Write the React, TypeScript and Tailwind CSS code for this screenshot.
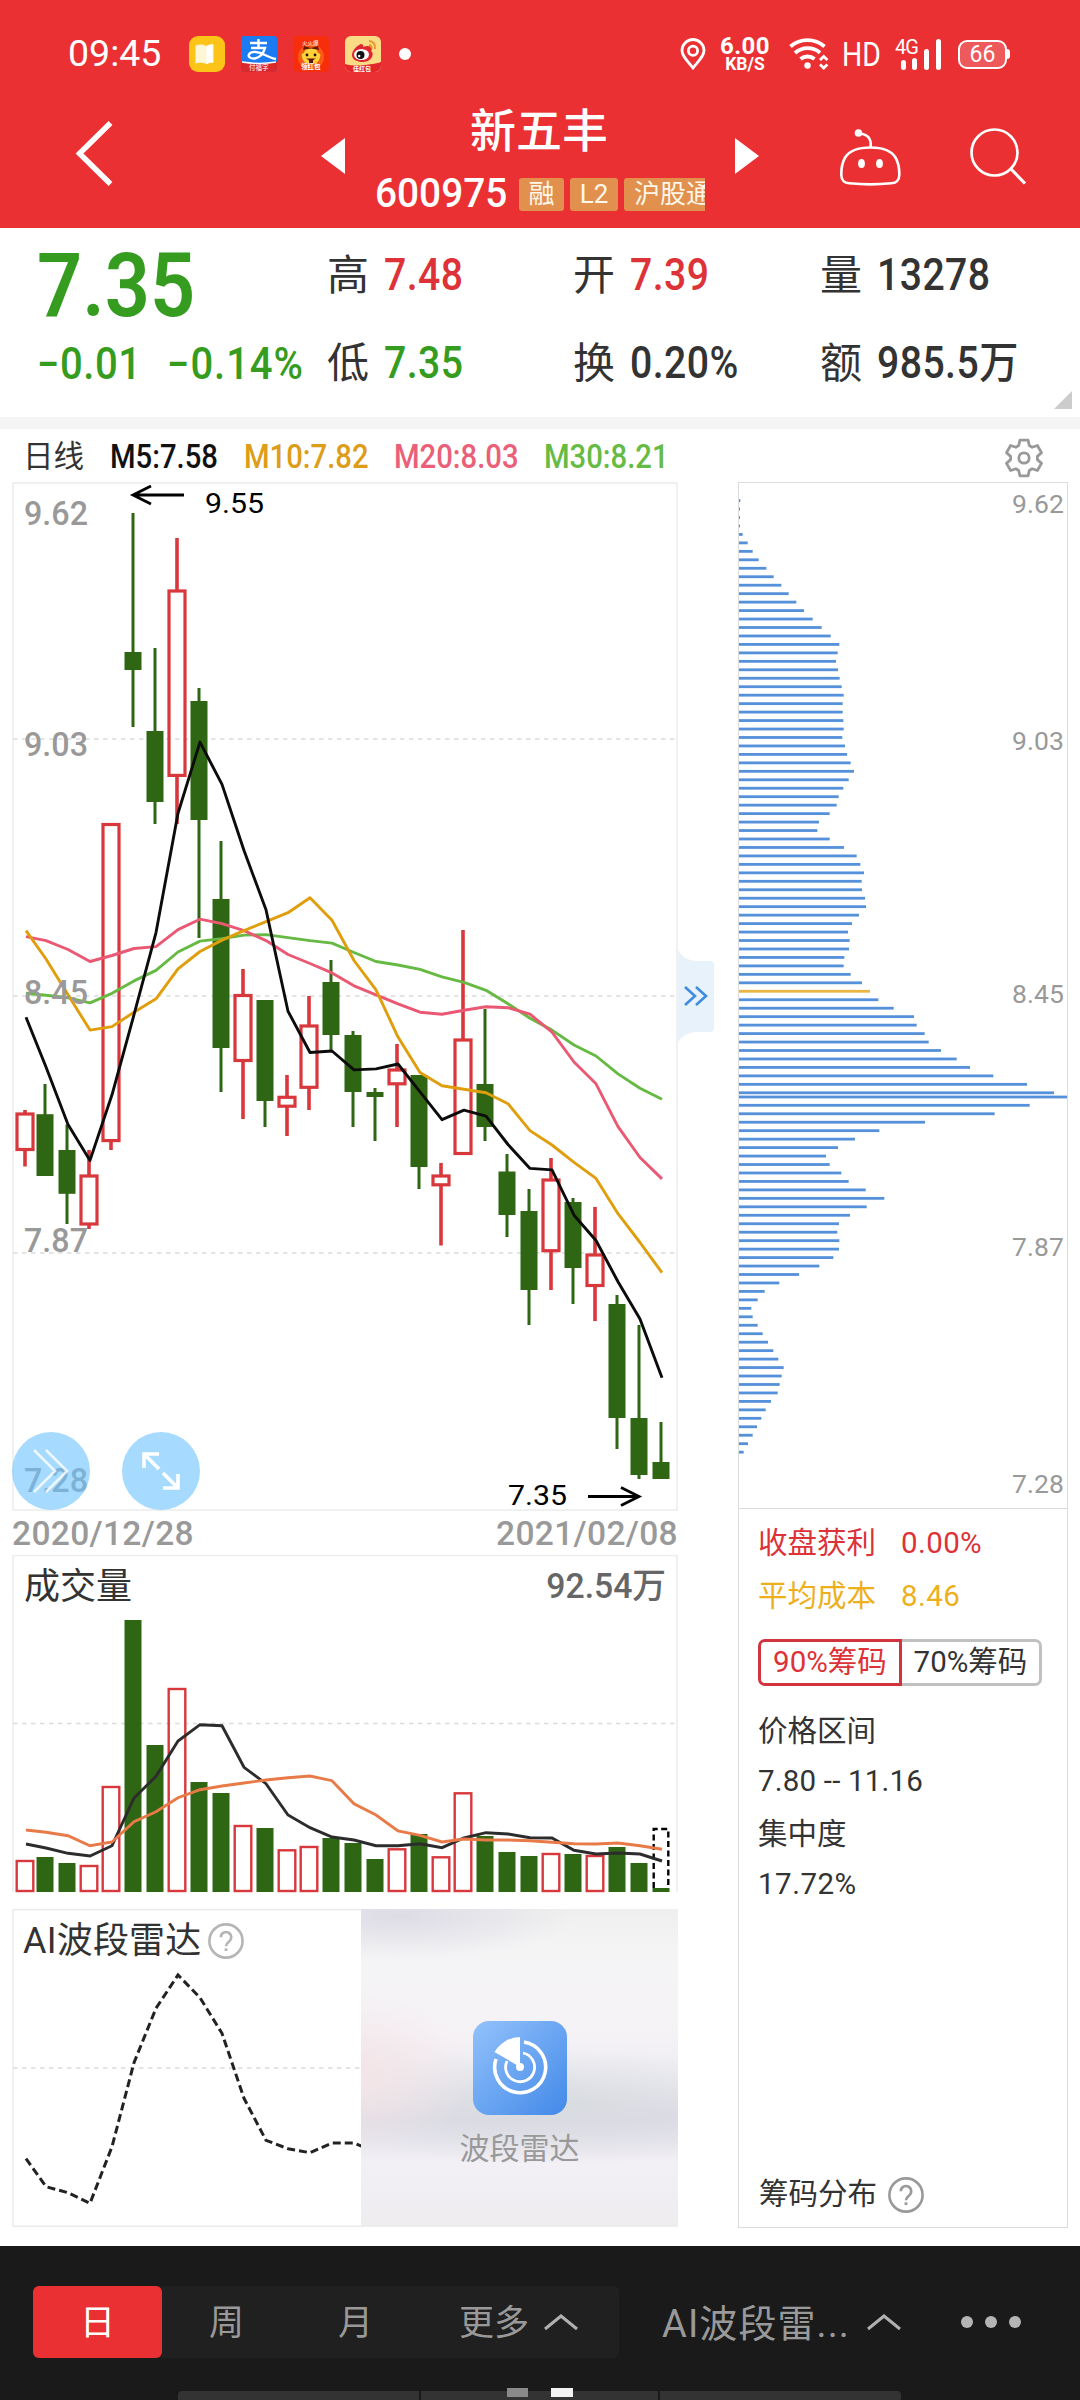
import type { ReactNode } from "react";
import clsx from "clsx";

type Candle = {
  up: boolean;
  high: number;
  top: number;
  bottom: number;
  low: number;
};

const c = (up: boolean, high: number, top: number, bottom: number, low: number): Candle => ({
  up,
  high,
  top,
  bottom,
  low,
});

const candles: Candle[] = [
  c(true, 1110, 1114, 1149.5, 1166.5),
  c(false, 1084, 1114.2, 1176, 1176),
  c(false, 1124.6, 1150, 1193.8, 1224),
  c(true, 1150, 1176, 1224, 1229),
  c(true, 824, 824.5, 1140.6, 1150),
  c(false, 513, 652, 670, 727),
  c(false, 648, 731, 802, 824),
  c(true, 538, 591, 775.4, 824),
  c(false, 688, 701, 820, 938),
  c(false, 841, 899, 1048, 1092),
  c(true, 969, 995.5, 1060.5, 1119),
  c(false, 1000, 1000, 1101, 1127),
  c(true, 1075, 1097.3, 1106.2, 1136),
  c(true, 996, 1026, 1087.3, 1110),
  c(false, 960, 982, 1035, 1050),
  c(false, 1031, 1035, 1092, 1127),
  c(false, 1088, 1092, 1097, 1141),
  c(true, 1044, 1070, 1083.8, 1127),
  c(false, 1075, 1075, 1167, 1189),
  c(true, 1163, 1176, 1184.8, 1245.5),
  c(true, 930, 1040, 1153.5, 1154),
  c(false, 1009, 1084, 1127, 1141),
  c(false, 1154, 1171.5, 1215, 1237),
  c(false, 1189, 1211, 1290, 1325),
  c(true, 1158, 1180, 1250.7, 1290),
  c(false, 1198, 1202, 1268, 1304),
  c(true, 1207, 1255, 1285.5, 1321),
  c(false, 1295, 1304, 1418, 1449),
  c(false, 1325, 1418, 1475, 1479),
  c(false, 1422, 1462, 1479, 1479),
];

const ma5 = [
  1017.2, 1067, 1124.6, 1160.4, 1094.8, 1014.7, 932.6, 813.2, 742.1, 784.4, 850.5, 909.7, 1011.2, 1052.5, 1051,
  1069.9, 1068.9, 1064, 1091.8, 1119.7, 1110.2, 1116.2, 1144.5, 1168.4, 1169.9, 1215.2, 1240.5, 1281.7, 1319, 1377.7,
];
const ma10 = [
  930.6, 959, 994.8, 1030.1, 1026.6, 1012.2, 998.8, 968.9, 951.5, 940.1, 930.6, 921.7, 912.7, 897.8, 920.2, 960.5,
  989.8, 1037.1, 1072.4, 1085.8, 1089.3, 1092.8, 1103.7, 1130.6, 1145, 1162.4, 1178.4, 1213.7, 1242.5, 1272.7,
];
const ma20 = [
  936.6, 940.6, 949.5, 961.5, 955.5, 948.5, 946.6, 929.6, 919.2, 923.7, 930.6, 940.6, 954.5, 963.5, 972.9, 985.8,
  994.8, 1003.8, 1012.2, 1014.2, 1010.2, 1006.7, 1007.7, 1014.2, 1032.1, 1062, 1083.8, 1126.6, 1157.5, 1178.9,
];
const ma30 = [
  993.3, 995.3, 997.8, 1002.8, 993.3, 980.9, 970.4, 952, 941.1, 938.6, 935.1, 934.6, 937.6, 940.6, 943.1, 952.5,
  961.5, 965, 969.4, 976.9, 982.4, 990.3, 1003.8, 1018.2, 1030.1, 1045, 1056, 1073.9, 1088.3, 1099.3,
];

const volumeTops = [
  1861, 1857, 1863, 1866, 1787, 1620, 1745, 1689, 1782, 1793, 1826, 1828, 1850.3, 1847, 1838, 1843, 1859, 1849.3,
  1834, 1857.3, 1793.3, 1836, 1852, 1856, 1854, 1854, 1856, 1847, 1863,
];
const volMa5 = [
  1844, 1848, 1853.3, 1856, 1845.7, 1798, 1776.3, 1741, 1724.7, 1725.7, 1767.3, 1783.7, 1815, 1827.7, 1837, 1840,
  1845.7, 1845.7, 1843.7, 1847.7, 1838, 1832.7, 1834, 1837.7, 1838, 1850.3, 1854, 1853, 1854, 1861,
];
const volMa10 = [
  1830, 1832.3, 1835.7, 1845.7, 1842, 1821.7, 1811.7, 1797.7, 1789.7, 1786, 1783, 1780, 1777.7, 1776, 1780.7, 1803.7,
  1815, 1831, 1835.3, 1842, 1839, 1840, 1840, 1840.7, 1842.3, 1843.7, 1844, 1843, 1845.7, 1849.3,
];
const radar = [
  2158.7, 2186.7, 2192.7, 2203.3, 2146.7, 2062.7, 2008.3, 1975, 1997.7, 2033.3, 2098.3, 2140.3, 2148.7, 2152.7, 2143,
  2143, 2152,
];

// chip distribution, bar lengths from the highest price to the lowest
const chipsUpper = [
  4, 3, 3, 3, 11, 26, 41, 59, 82, 104, 127, 149, 172, 195, 221, 248, 275, 301, 296, 291, 297, 302, 308, 314, 311, 311,
  313, 314, 310, 318, 324, 335, 345, 329, 313, 299, 293, 272, 240, 235, 272, 315, 353, 364, 375, 368, 369, 378, 381,
  360, 339, 327, 332, 330, 316, 314, 335, 369, 393, 418, 464, 525, 533, 557, 569, 606, 653, 693, 763, 864, 945,
];
const chipsLower = [
  872, 767, 558, 421, 348, 297, 261, 272, 307, 329, 380, 436, 383, 333, 300, 295, 301, 300, 283, 241, 180, 121, 77, 56,
  37, 41, 56, 71, 87, 103, 118, 134, 128, 122, 116, 96, 80, 67, 54, 41, 27, 14,
];
const AVERAGE_INDEX = 58;
const STEP = 8.46;

const centerX = (i: number) => (i === 0 ? 25 : 45 + 22 * (i - 1));
const toPoints = (values: number[]) => values.map((y, i) => `${centerX(i) + 1},${y}`).join(" ");

const GREEN = "#2f6613";
const RED = "#d8383c";

const GridLine = ({ y }: { y: number }) => (
  <line x1={13} x2={677} y1={y} y2={y} stroke="#dcdcdc" strokeWidth={1.5} strokeDasharray="4.5 4.5" />
);

const PriceChart = () => (
  <svg viewBox="12 482 666 1029" className="block h-[1029px] w-[666px] font-[Roboto,sans-serif]">
    <rect x={13} y={483} width={664} height={1027} fill="none" stroke="#ececec" strokeWidth={1.5} />
    <GridLine y={739} />
    <GridLine y={996} />
    <GridLine y={1253} />
    {candles.map(({ up, high, top, bottom, low }, i) => {
      const x = centerX(i);
      return up ? (
        <g key={i} fill="none" stroke={RED} strokeWidth={3.2}>
          <path d={`M${x} ${high}V${top}M${x} ${bottom}V${low}`} strokeWidth={3.6} />
          <rect x={x - 8} y={top} width={16} height={bottom - top} />
        </g>
      ) : (
        <g key={i} fill={GREEN}>
          <rect x={x - 1.5} y={high} width={3} height={low - high} />
          <rect x={x - 8.5} y={top} width={17} height={bottom - top} />
        </g>
      );
    })}
    <g fill="none" strokeWidth={2.9} strokeLinejoin="round">
      <polyline points={toPoints(ma30)} stroke="#66b943" />
      <polyline points={toPoints(ma20)} stroke="#ea5873" />
      <polyline points={toPoints(ma10)} stroke="#e09d0c" />
      <polyline points={toPoints(ma5)} stroke="#0c0c0c" />
    </g>
    <g fill="#999" fontSize={34} fontWeight={500}>
      <text x={24} y={525} textLength={64} lengthAdjust="spacingAndGlyphs">9.62</text>
      <text x={24} y={756} textLength={64} lengthAdjust="spacingAndGlyphs">9.03</text>
      <text x={24} y={1003.5} textLength={64} lengthAdjust="spacingAndGlyphs">8.45</text>
      <text x={24} y={1252} textLength={64} lengthAdjust="spacingAndGlyphs">7.87</text>
      <text x={24} y={1491.5} textLength={64} lengthAdjust="spacingAndGlyphs">7.28</text>
    </g>
    <g fill="#000" fontSize={28.5}>
      <text x={205} y={512.5} textLength={59} lengthAdjust="spacingAndGlyphs">9.55</text>
      <text x={508} y={1505} textLength={59} lengthAdjust="spacingAndGlyphs">7.35</text>
    </g>
    <path
      d="M184 495H134M151 486L133 495L151 504M588 1496.5H638M621 1487.5L639 1496.5L621 1505.5"
      fill="none"
      stroke="#000"
      strokeWidth={2.8}
    />
  </svg>
);

const VolumeChart = () => (
  <svg viewBox="12 1555 666 338" className="block h-[338px] w-[666px]">
    <path d="M13 1892V1555.5H677V1892" fill="none" stroke="#ececec" strokeWidth={1.5} />
    <GridLine y={1723.5} />
    {volumeTops.map((y, i) =>
      candles[i].up ? (
        <rect key={i} x={centerX(i) - 8.3} y={y} width={16.6} height={1891 - y} fill="none" stroke={RED} strokeWidth={2.4} />
      ) : (
        <rect key={i} x={centerX(i) - 8.5} y={y} width={17} height={1892 - y} fill={GREEN} />
      )
    )}
    <rect x={652.5} y={1888} width={17} height={4} fill={GREEN} />
    <path d="M653.7 1888V1829H668.3V1888" fill="none" stroke="#000" strokeWidth={2.4} strokeDasharray="6 3.5" />
    <polyline points={toPoints(volMa5)} fill="none" stroke="#2c2c2c" strokeWidth={2.9} />
    <polyline points={toPoints(volMa10)} fill="none" stroke="#e87a48" strokeWidth={2.9} />
  </svg>
);

const RadarChart = () => (
  <svg viewBox="12 1909 666 318" className="block h-[318px] w-[666px]">
    <rect x={13} y={1909.7} width={664} height={316.5} fill="none" stroke="#ececec" strokeWidth={1.5} />
    <GridLine y={2068} />
    <polyline points={toPoints(radar)} fill="none" stroke="#222" strokeWidth={3} strokeDasharray="8 4" />
  </svg>
);

const ChipChart = () => {
  const bars = [
    ...chipsUpper.map((w, i) => ({ w, y: 500.6 + i * STEP, avg: i === AVERAGE_INDEX })),
    { w: 984, y: 1097, avg: false },
    ...chipsLower.map((w, i) => ({ w, y: 1105.3 + i * STEP, avg: false })),
  ];
  return (
    <svg viewBox="739 483 328 1025" className="block h-[1025px] w-[328px] font-[Roboto,sans-serif]">
      {bars.map(({ w, y, avg }, i) => (
        <rect key={i} x={739} y={y - 1.4} width={w / 3} height={2.8} fill={avg ? "#eab543" : "#5590da"} />
      ))}
      <g fill="#999" fontSize={26.5}>
        <text x={1012} y={512.5} textLength={52}>9.62</text>
        <text x={1012} y={749.5} textLength={52}>9.03</text>
        <text x={1012} y={1003} textLength={52}>8.45</text>
        <text x={1012} y={1256} textLength={52}>7.87</text>
        <text x={1012} y={1493} textLength={52}>7.28</text>
      </g>
    </svg>
  );
};

const gearPath = (() => {
  const pts: string[] = [];
  for (let i = 0; i < 6; i++) {
    for (const [r, a] of [[13.5, -23], [18.3, -13], [18.3, 13], [13.5, 23]]) {
      const t = ((i * 60 + a - 90) * Math.PI) / 180;
      pts.push(`${(20 + r * Math.cos(t)).toFixed(2)} ${(20 + r * Math.sin(t)).toFixed(2)}`);
    }
  }
  return `M${pts.join("L")}Z`;
})();

const GearIcon = () => (
  <svg viewBox="0 0 40 40" className="size-10" fill="none" stroke="#999" strokeWidth={2.8} strokeLinejoin="round">
    <path d={gearPath} />
    <circle cx={20} cy={20} r={5.2} />
  </svg>
);

const HelpIcon = ({ color = "#b5b5b5" }: { color?: string }) => (
  <svg viewBox="0 0 36 36" className="size-9" fill="none" stroke={color} strokeWidth={2.6}>
    <circle cx={18} cy={18} r={16.6} />
    <path d="M12.8 14.3a5.2 5.2 0 1 1 8.6 3.9c-2 1.6-3.4 2.4-3.4 5.1" />
    <path d="M18 25.3v2.7" strokeWidth={2.8} />
  </svg>
);

const ChevronUp = () => (
  <svg viewBox="0 0 36 18" className="h-[18px] w-9" fill="none" stroke="#b0b0b0" strokeWidth={3}>
    <path d="M2 16L18 3L34 16" />
  </svg>
);

const StatusBar = () => (
  <div className="flex h-[108px] items-center text-white">
    <span className="ml-[68px] w-[121px] text-[37.5px] leading-none">09:45</span>
    <div className="flex items-center gap-4">
      <svg viewBox="0 0 36 36" className="size-9">
        <rect width={36} height={36} rx={9} fill="#fcc419" />
        <path d="M6.5 9.5c4-1.6 8-1.4 11 .6 2.500-1.400 5-1.800 7-1.300V27c-3-.5-5 0-7 1-3.500-1.600-7-1.600-11-.6z" fill="#fff6d6" />
        <path d="M17.500 10l6-2v18l-6 2z" fill="#fff" />
      </svg>
      <svg viewBox="0 0 36 36" className="size-9">
        <rect width={36} height={36} rx={3} fill="#1a7bf2" />
        <path d="M0 25.500c12 2.500 24 2.500 36 0V33a3 3 0 0 1-3 3H3a3 3 0 0 1-3-3z" fill="#d9292d" />
        <path d="M1 26c12 1.800 24 1.800 34 0" stroke="#fff" strokeWidth={1.3} fill="none" />
        <path d="M9 7h17M17.500 3v9M10 12h14c-1.500 5-5 9.500-10 10.500-5 .5-7-2-6-4 2-4 10-3 16 .5 4 2 7 3.500 11 4" stroke="#fff" strokeWidth={2.4} fill="none" />
        <text x={8} y={34} fontSize={6.5} fill="#fff">付福字</text>
      </svg>
      <svg viewBox="0 0 36 36" className="size-9">
        <rect width={36} height={36} rx={5} fill="#f72d0c" />
        <circle cx={18} cy={21} r={13} fill="#fb5a14" />
        <path d="M9 21c-1-2 0-4 2-4l2-5h10l2 5c2 0 3 2 2 4-1 5-4 7-9 7s-8-2-9-7z" fill="#ffd23c" />
        <path d="M10 14l1-4 7 2 7-2 1 4-8-1.500z" fill="#6a1a08" />
        <circle cx={14} cy={19} r={1.4} fill="#2a1208" />
        <circle cx={22} cy={19} r={1.4} fill="#2a1208" />
        <path d="M13 22.500h10c-1.500 1-2.500 1-3 2v3h-4v-3c-.5-1-1.500-1-3-2z" fill="#5b1507" />
        <text x={9} y={9} fontSize={5.500} fill="#fff">火火爆</text>
        <text x={8} y={33} fontSize={6.500} fill="#fff" fontWeight={700}>领红包</text>
      </svg>
      <svg viewBox="0 0 36 36" className="size-9">
        <rect width={36} height={36} rx={6} fill="#fbdc86" />
        <path d="M0 28c10 3 20 1 27 0s9-2 9-2v4a6 6 0 0 1-6 6H6a6 6 0 0 1-6-6z" fill="#e3262c" />
        <path d="M7 19c0-5 6-10 9-11 3 0 2 3 2 3s5-2 8 0c2 2 0 4 0 4s3 2 1 6-6 5-10 5-10-2-10-7z" fill="#e0262e" />
        <ellipse cx={16.500} cy={18.500} rx={7.500} ry={5.500} fill="#fff" />
        <circle cx={15.500} cy={19} r={4} fill="#111" />
        <circle cx={14.200} cy={20} r={1.200} fill="#fff" />
        <path d="M24 5c4 0 6.500 3 6 8M24 9c2 0 3 1.500 2.500 3.500" stroke="#e9962c" strokeWidth={2} fill="none" />
        <text x={8} y={34.500} fontSize={6} fill="#fff" fontWeight={700}>佳红包</text>
      </svg>
    </div>
    <span className="ml-[18px] size-3 rounded-full bg-white" />
    <svg viewBox="0 0 26 32" className="ml-[269px] h-8 w-[26px]" fill="none" stroke="#fff" strokeWidth={2.800}>
      <path d="M13 30C7 22.500 2 18 2 12.500a11 11 0 0 1 22 0C24 18 19 22.500 13 30z" />
      <circle cx={13} cy={12.800} r={4.600} />
    </svg>
    <div className="ml-[14px] flex w-[50px] flex-col items-center font-bold leading-none">
      <span className="text-[24px] leading-[20px] tracking-[0.4px]">6.00</span>
      <span className="text-[17.500px] leading-[16px]">KB/S</span>
    </div>
    <svg viewBox="0 0 40 32" className="ml-[19px] h-8 w-10" fill="none" stroke="#fff" strokeWidth={3.800}>
      <path d="M1.500 8.500a26 26 0 0 1 34 0M6 15a19 19 0 0 1 25-.3M11.500 21a11 11 0 0 1 14 0" />
      <circle cx={18.500} cy={27.500} r={3.200} fill="#fff" stroke="none" />
      <path d="M31 22l3.700-3.500 3.700 3.500M31 26.500l3.700 3.500 3.700-3.500" strokeWidth={2.800} />
    </svg>
    <span className="ml-[13px] w-[38px] origin-left scale-x-[0.86] text-[33px] leading-none">HD</span>
    <div className="ml-[15px] flex h-8 w-[46px] items-end gap-[7px]">
      <span className="w-0 self-start whitespace-nowrap text-[20px] leading-[19px] tracking-[-1px]">4G</span>
      <span className="ml-[-1px] h-[10px] w-[5px] rounded-sm bg-white" />
      <span className="ml-[-1px] h-3 w-[5px] rounded-sm bg-white" />
      <span className="h-[21px] w-[5px] rounded-sm bg-white" />
      <span className="h-[31px] w-[5px] rounded-sm bg-white" />
    </div>
    <div className="ml-[17px] flex items-center">
      <div className="flex h-[29px] w-[49px] items-center justify-center rounded-[9px] border-[2.5px] border-white bg-white/20 text-[23px] leading-none">
        66
      </div>
      <span className="h-2.5 w-[3px] rounded-r bg-white" />
    </div>
  </div>
);

const Tag = ({ children, className }: { children: ReactNode; className?: string }) => (
  <span
    className={clsx(
      "flex h-[33px] shrink-0 items-center justify-center whitespace-nowrap rounded-[3px] bg-[#e2904e] text-[26px] leading-none text-[#fff8ea]",
      className
    )}
  >
    {children}
  </span>
);

const NavBar = () => (
  <div className="flex h-[120px] items-start text-white">
    <svg viewBox="0 0 40 66" className="ml-[75px] mt-3 h-[66px] w-10" fill="none" stroke="#fff" strokeWidth={5.500}>
      <path d="M35.500 3L4.500 33.500L35.500 64" />
    </svg>
    <svg viewBox="0 0 24 36" className="ml-[206px] mt-[30px] h-9 w-6" fill="#fff">
      <path d="M24 0V36L0 18z" />
    </svg>
    <div className="ml-[29px] flex w-[331px] flex-col">
      <h1 className="mt-[-4px] h-[66px] w-[330px] text-center text-[46px] font-medium leading-[54px]">新五丰</h1>
      <div className="flex h-12 w-[331px] items-center overflow-hidden">
        <span className="ml-px mr-[11px] w-[133px] origin-left scale-x-[0.97] text-[40px] font-medium leading-none">
          600975
        </span>
        <Tag className="mr-[6px] w-[45px]">融</Tag>
        <Tag className="mr-[6px] w-12">L2</Tag>
        <Tag className="w-[98px]">沪股通</Tag>
      </div>
    </div>
    <svg viewBox="0 0 24 36" className="ml-[30px] mt-[30px] h-9 w-6" fill="#fff">
      <path d="M0 0V36L24 18z" />
    </svg>
    <svg viewBox="0 0 62 58" className="ml-[80px] mt-5 h-[58px] w-[62px]" fill="none" stroke="#fff" strokeWidth={2.600}>
      <path d="M31.500 19.500c12 0 21 3.500 25 10 2.500 4.500 4 10 3.800 17.500-.2 6-2.800 7.800-8 8.300-13 1.300-29 1.300-42 0-5.200-.5-7.800-2.300-8-8.300C2.100 39.500 3.600 34 6.100 29.500c4-6.500 13-10 25.400-10z" />
      <path d="M31.500 19.500C33 10 28 6 20 5.500" />
      <circle cx={19.500} cy={5} r={3.800} fill="#fff" stroke="none" />
      <ellipse cx={22.500} cy={35.500} rx={3.400} ry={4.500} fill="#fff" stroke="none" />
      <ellipse cx={40.500} cy={35.500} rx={3.400} ry={4.500} fill="#fff" stroke="none" />
    </svg>
    <svg viewBox="0 0 58 58" className="ml-[69px] mt-5 size-[58px]" fill="none" stroke="#fff" strokeWidth={2.700}>
      <circle cx={24.500} cy={24.500} r={23} />
      <path d="M41 41L55 55.500" strokeWidth={3.200} />
    </svg>
  </div>
);

const quoteColors = {
  red: "text-[#dd3338]",
  green: "text-[#359c20]",
  dark: "text-[#333]",
};

const Quote = ({ label, value, color }: { label: string; value: string; color: keyof typeof quoteColors }) => (
  <div className="flex h-[54px] items-center whitespace-nowrap leading-none">
    <span className="w-[57px] text-[42px] text-[#333]">{label}</span>
    <span className={clsx("origin-left scale-x-[0.9] text-[43.500px] font-medium tracking-[0.5px]", quoteColors[color])}>
      {value}
    </span>
  </div>
);

const QuotePanel = () => (
  <section className="relative flex h-[189px] bg-white">
    <div className="ml-[37px] w-[290px] whitespace-nowrap font-medium text-[#359c20]">
      <p className="mt-[12px] h-[92px] origin-left scale-x-[0.89] text-[89px] font-semibold leading-[92px]">7.35</p>
      <div className="mt-[6px] flex h-[54px] items-center text-[43.500px] leading-none">
        <span className="w-[130px] origin-left scale-x-[0.92] tracking-[0.6px]">−0.01</span>
        <span className="origin-left scale-x-[0.92] tracking-[1px]">−0.14%</span>
      </div>
    </div>
    <div className="mt-[21px] grid h-fit grid-cols-[246px_247px_250px] gap-y-[34px]">
      <Quote label="高" value="7.48" color="red" />
      <Quote label="开" value="7.39" color="red" />
      <Quote label="量" value="13278" color="dark" />
      <Quote label="低" value="7.35" color="green" />
      <Quote label="换" value="0.20%" color="dark" />
      <Quote label="额" value="985.5万" color="dark" />
    </div>
    <svg viewBox="0 0 18 18" className="absolute bottom-2 right-2 size-[18px]" fill="#ccc">
      <path d="M18 0V18H0z" />
    </svg>
  </section>
);

const Legend = () => (
  <div className="flex h-[53px] items-center whitespace-nowrap pt-1 text-[32.500px] font-medium leading-none">
    <span className="ml-[23px] w-[87px] text-[30.500px] font-normal text-[#333]">日线</span>
    <span className="w-[134px] origin-left scale-x-[0.9] text-[#111]">M5:7.58</span>
    <span className="w-[150px] origin-left scale-x-[0.9] text-[#dd9d18]">M10:7.82</span>
    <span className="w-[150px] origin-left scale-x-[0.9] text-[#ea6079]">M20:8.03</span>
    <span className="w-[460px] origin-left scale-x-[0.9] text-[#66bb44]">M30:8.21</span>
    <GearIcon />
  </div>
);

const FloatButton = ({ children, className }: { children: ReactNode; className: string }) => (
  <button
    className={clsx(
      "absolute bottom-[1px] flex size-[78px] items-center justify-center rounded-full bg-[#6bc3ff]/60",
      className
    )}
  >
    {children}
  </button>
);

const ChartColumn = () => (
  <div className="w-[666px]">
    <div className="relative">
      <PriceChart />
      <FloatButton className="left-0">
        <svg viewBox="0 0 40 46" className="h-[46px] w-10 opacity-80" fill="none" stroke="#fff" strokeWidth={2.600}>
          <path d="M3 2L24 23L3 44M15 2L36 23L15 44" />
        </svg>
      </FloatButton>
      <FloatButton className="left-[110px]">
        <svg viewBox="0 0 40 40" className="size-10" fill="none" stroke="#fff" strokeWidth={3.600}>
          <path d="M3 17V3H18M3 3L18 18M37 23V37H22M37 37L22 22" />
        </svg>
      </FloatButton>
      <div className="absolute left-full top-[467px] h-[94px] w-9">
        <svg viewBox="0 0 36 94" className="h-[94px] w-9" fill="none">
          <path d="M0 0C3 8 9 11 18 12H32Q36 12 36 16V79Q36 83 32 83H18C9 84 3 87 0 94z" fill="#e8f2fb" />
          <path d="M7 38L17 47L7 56M18 38L28 47L18 56" stroke="#3f8be0" strokeWidth={2.600} />
        </svg>
      </div>
    </div>
    <div className="flex h-11 items-center justify-between whitespace-nowrap pt-px text-[33.500px] font-medium leading-none tracking-[0.35px] text-[#999]">
      <span>2020/12/28</span>
      <span>2021/02/08</span>
    </div>
    <div className="relative">
      <VolumeChart />
      <div className="absolute inset-x-3 top-2 flex h-12 items-center justify-between leading-none">
        <span className="text-[36px] text-[#333]">成交量</span>
        <span className="origin-right scale-x-[0.95] text-[35.500px] font-medium text-[#666]">92.54万</span>
      </div>
    </div>
    <div className="relative mt-4">
      <RadarChart />
      <div className="absolute left-[11px] top-2 flex h-12 items-center gap-[7px] leading-none">
        <span className="text-[36px] tracking-[0.2px] text-[#333]">AI波段雷达</span>
        <HelpIcon />
      </div>
      <div className="absolute right-0 top-0 flex h-full w-[317px] flex-col items-center bg-[radial-gradient(ellipse_55%_14%_at_12%_2%,#dddce6_0%,transparent_100%),radial-gradient(ellipse_35%_25%_at_0%_52%,#f3e4e7_0%,transparent_100%),radial-gradient(ellipse_80%_18%_at_60%_62%,#d8dbe0_0%,transparent_100%),linear-gradient(#efefef_0%,#f4f4f5_12%,#f5f2f6_40%,#ececf1_55%,#dddce6_66%,#f3f0f5_80%,#efecf0_100%)]">
        <svg viewBox="0 0 96 94" className="mt-[112px] h-[94px] w-24" fill="none">
          <defs>
            <linearGradient id="radar" x1="0" y1="0" x2="1" y2="1">
              <stop offset="0" stopColor="#93c2fb" />
              <stop offset="1" stopColor="#4289e8" />
            </linearGradient>
          </defs>
          <rect x={1} width={94} height={94} rx={16} fill="url(#radar)" />
          <path d="M48 46V16A30 30 0 0 0 22.500 31z" fill="#fff" />
          <circle cx={48} cy={46} r={4} fill="#fff" />
          <path d="M52 21A25.500 25.500 0 1 1 24 38" stroke="#fff" strokeWidth={3.600} />
          <path d="M51 32A14.500 14.500 0 1 1 35 40" stroke="#fff" strokeWidth={2.800} />
        </svg>
        <span className="mt-[18px] text-[30px] leading-8 text-[#999]">波段雷达</span>
      </div>
    </div>
  </div>
);

const ChipPanel = () => (
  <aside className="flex h-[1746px] w-[330px] flex-col border border-[#dcdcdc] text-[29.500px] leading-none text-[#333]">
    <ChipChart />
    <div className="flex grow flex-col border-t border-[#dcdcdc] pl-[19px]">
      <div className="mt-[15px] flex h-10 items-center text-[#dc3238]">
        <span className="w-[143px]">收盘获利</span>
        <span className="tracking-[0.4px]">0.00%</span>
      </div>
      <div className="mt-[13px] flex h-10 items-center text-[#edb01c]">
        <span className="w-[143px]">平均成本</span>
        <span className="tracking-[0.4px]">8.46</span>
      </div>
      <div className="mt-[22px] flex h-[47px] whitespace-nowrap">
        <button className="flex w-[144px] items-center justify-center rounded-l-[7px] border-[3px] border-[#d2343f] text-[#dc3238]">
          90%筹码
        </button>
        <button className="flex w-[140px] items-center justify-center rounded-r-[7px] border-[3px] border-l-0 border-[#c0c0c0]">
          70%筹码
        </button>
      </div>
      <p className="mt-[26px] flex h-10 items-center">价格区间</p>
      <p className="mt-[10px] flex h-10 items-center tracking-[0.2px]">7.80 -- 11.16</p>
      <p className="mt-[13px] flex h-10 items-center">集中度</p>
      <p className="mt-[10px] flex h-10 items-center tracking-[0.5px]">17.72%</p>
      <div className="mb-[12px] mt-auto flex h-10 items-center gap-[11px] pl-px">
        <span>筹码分布</span>
        <HelpIcon color="#999" />
      </div>
    </div>
  </aside>
);

const periods = ["日", "周", "月"];

const BottomBar = () => (
  <footer className="flex h-[154px] flex-col bg-[#1a1a1a] text-[35px] leading-none text-[#999]">
    <div className="mt-10 flex h-[72px] items-center whitespace-nowrap">
      <div className="ml-[33px] flex h-full w-[586px] items-center rounded-md bg-[#202020]">
        {periods.map((period, i) => (
          <button
            key={period}
            className={clsx(
              "flex h-full w-[129px] items-center justify-center rounded-md pt-[3px]",
              i === 0 && "bg-[#ea3032] text-white"
            )}
          >
            {period}
          </button>
        ))}
        <button className="ml-[39px] flex items-center gap-[14px]">
          <span className="pt-[3px]">更多</span>
          <ChevronUp />
        </button>
      </div>
      <button className="ml-[43px] flex items-center">
        <span className="w-[204px] pt-[3px] text-left text-[38px] tracking-[1.1px]">AI波段雷...</span>
        <ChevronUp />
      </button>
      <div className="ml-[59px] flex gap-3">
        <span className="size-3 rounded-full bg-[#b5b5b5]" />
        <span className="size-3 rounded-full bg-[#b5b5b5]" />
        <span className="size-3 rounded-full bg-[#b5b5b5]" />
      </div>
    </div>
    <div className="relative ml-[178px] mt-auto flex h-[9px] w-[723px] gap-0.5">
      <span className="w-[241px] rounded-tl bg-[#333]" />
      <span className="w-[237px] bg-[#333]" />
      <span className="grow rounded-tr bg-[#333]" />
      <span className="absolute bottom-[3px] left-[329px] h-[9px] w-[21px] bg-[#8a8a8a]" />
      <span className="absolute bottom-[3px] left-[373px] h-[9px] w-[22px] bg-[#f2f2f2]" />
    </div>
  </footer>
);

const App = () => {
  return (
    <main className="h-[2400px] w-[1080px] overflow-hidden bg-white font-[Roboto,'Noto_Sans_CJK_SC',sans-serif]">
      <header className="h-[228px] bg-[#ea3032]">
        <StatusBar />
        <NavBar />
      </header>
      <QuotePanel />
      <div className="h-3 bg-[#f4f4f4]" />
      <Legend />
      <div className="flex h-[1764px] items-start pl-3">
        <ChartColumn />
        <div className="ml-[60px]">
          <ChipPanel />
        </div>
      </div>
      <BottomBar />
    </main>
  );
};

export default App;
